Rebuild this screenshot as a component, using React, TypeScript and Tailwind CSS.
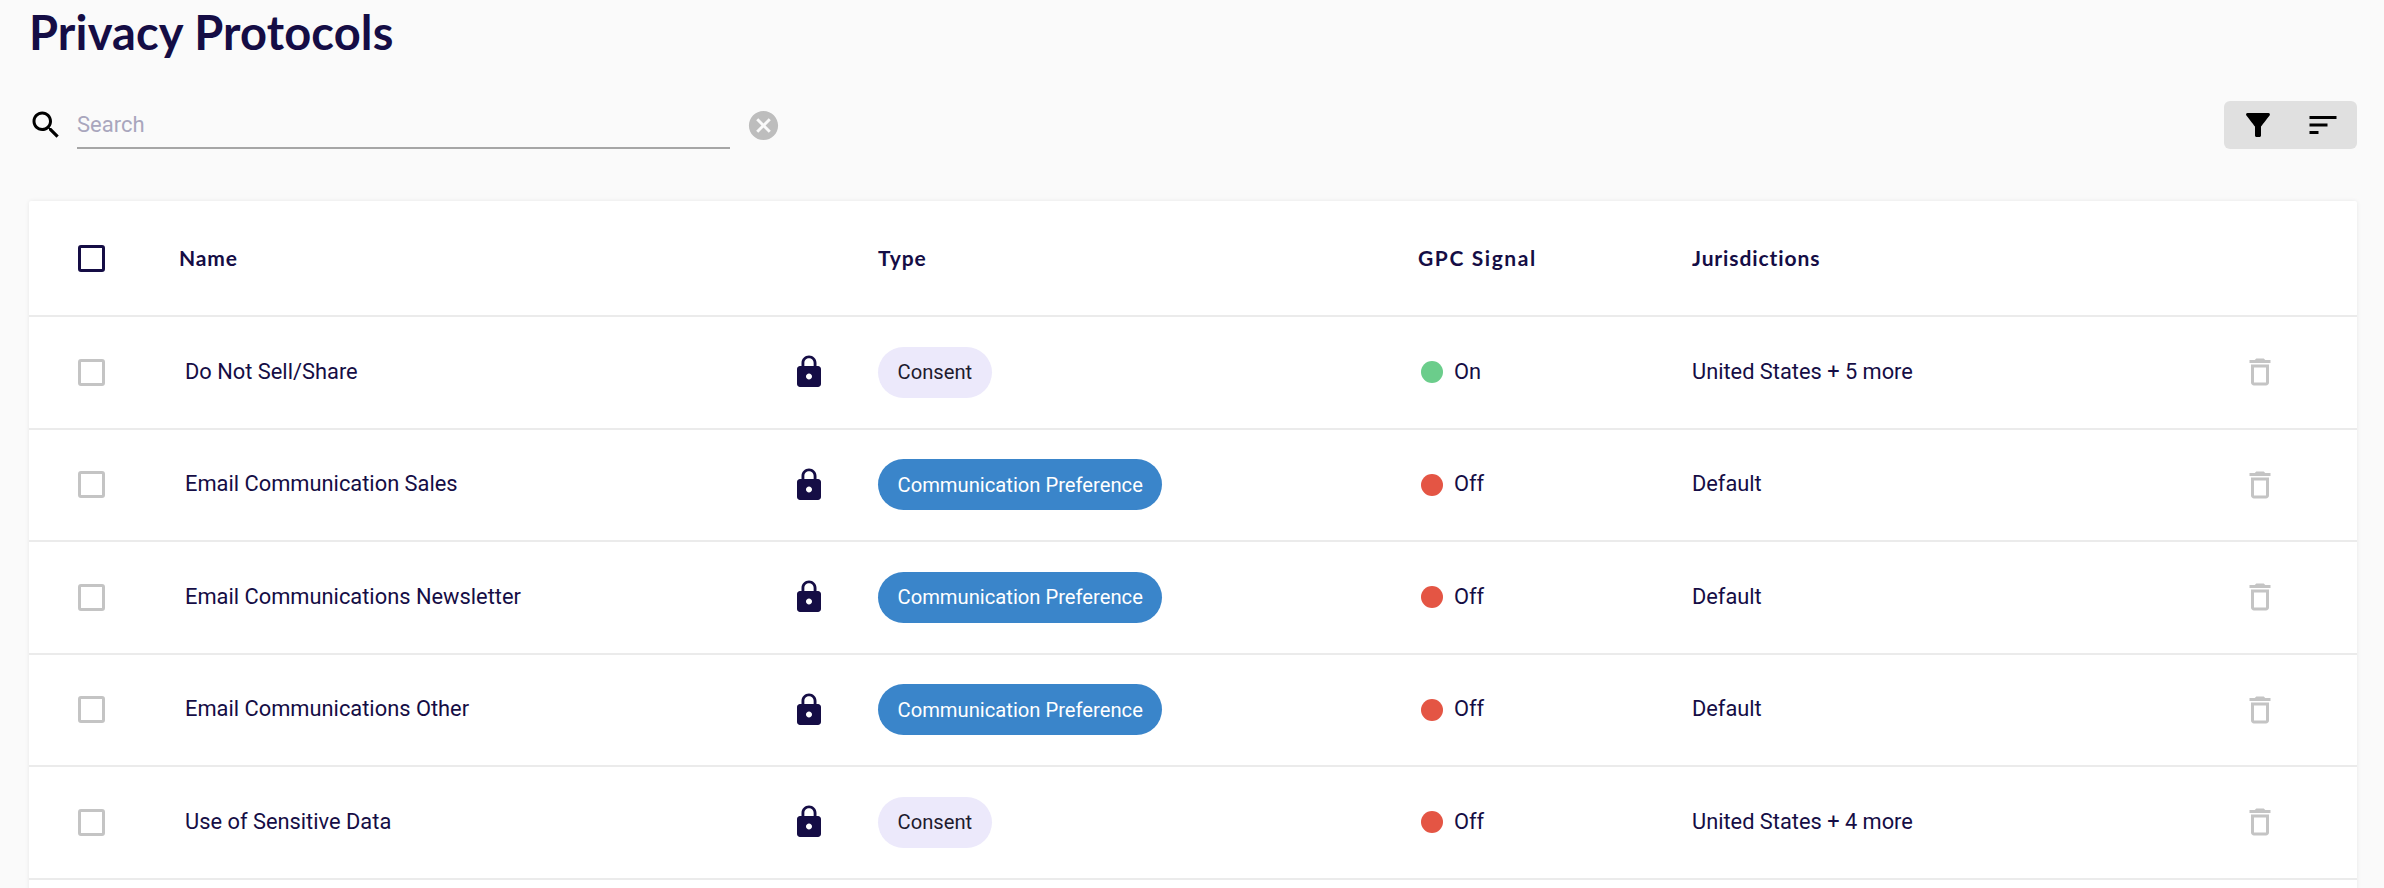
const M = (p: { d: string; c: string; s?: string }) => (
  <svg viewBox="0 0 24 24" className={`shrink-0 ${p.s ?? "w-9 h-9"} ${p.c}`} fill="currentColor" aria-hidden="true">
    <path d={p.d} />
  </svg>
);
const LOCK = "M18 8h-1V6c0-2.76-2.24-5-5-5S7 3.24 7 6v2H6c-1.1 0-2 .9-2 2v10c0 1.1.9 2 2 2h12c1.1 0 2-.9 2-2V10c0-1.1-.9-2-2-2zm-6 9c-1.1 0-2-.9-2-2s.9-2 2-2 2 .9 2 2-.9 2-2 2zm3.1-9H8.9V6c0-1.71 1.39-3.1 3.1-3.1 1.71 0 3.1 1.39 3.1 3.1v2z";
const TRASH = "M6 19c0 1.1.9 2 2 2h8c1.1 0 2-.9 2-2V7H6v12zM8 9h8v10H8V9zm7.5-5l-1-1h-5l-1 1H5v2h14V4z";

const rows = [
  { name: "Do Not Sell/Share", type: "Consent", on: true, jur: "United States + 5 more" },
  { name: "Email Communication Sales", type: "Communication Preference", on: false, jur: "Default" },
  { name: "Email Communications Newsletter", type: "Communication Preference", on: false, jur: "Default" },
  { name: "Email Communications Other", type: "Communication Preference", on: false, jur: "Default" },
  { name: "Use of Sensitive Data", type: "Consent", on: false, jur: "United States + 4 more" },
];

const grid = "grid grid-cols-[150px_699px_540px_274px_1fr] items-center";
const jost = "font-['Lato','Noto_Sans',sans-serif]";
const th = "text-[21px] font-bold tracking-[0.9px]";

export default function App() {
  return (
    <div className="h-[888px] overflow-hidden bg-[#fafafa] pl-[29px] pr-[27px] font-['Roboto',sans-serif] text-[#150d45]">
      <h1 className={`${jost} h-[62px] pt-[2px] text-[47px] leading-[60px] font-bold tracking-[0.15px] text-[#150d45]`}>
        Privacy Protocols
      </h1>
      <div className="mt-[39px] flex h-[48px] items-center">
        <svg viewBox="0 0 24 24" className="-ml-[1px] h-9 w-9 shrink-0 text-black" fill="currentColor" aria-hidden="true">
          <path d="M15.5 14h-.79l-.28-.27C15.41 12.59 16 11.11 16 9.5 16 5.91 13.09 3 9.5 3S3 5.91 3 9.5 5.91 16 9.5 16c1.61 0 3.09-.59 4.23-1.57l.27.28v.79l5 4.99L20.49 19l-4.99-5zm-6 0C7.01 14 5 11.99 5 9.5S7.01 5 9.5 5 14 7.01 14 9.5 11.99 14 9.5 14z" />
        </svg>
        <div className="ml-[13px] flex h-[48px] w-[653px] items-center border-b-2 border-[#a6a6a6] text-[22px] text-[#a9a6bd]">
          Search
        </div>
        <M d="M12 2C6.47 2 2 6.47 2 12s4.47 10 10 10 10-4.47 10-10S17.53 2 12 2zm5 13.59L15.59 17 12 13.41 8.41 17 7 15.59 10.59 12 7 8.41 8.41 7 12 10.59 15.59 7 17 8.41 13.41 12 17 15.59z" c="ml-[16px] text-[#bdbdbd]" s="h-[35px] w-[35px]" />
        <div className="ml-auto flex h-[48px] w-[133px] items-center justify-between rounded-[6px] bg-[#e0e0e0] pl-[16px] pr-[16px]">
          <M d="M4.25 5.61C6.27 8.2 10 13 10 13v6c0 .55.45 1 1 1h2c.55 0 1-.45 1-1v-6s3.72-4.8 5.74-7.39c.51-.66.04-1.61-.79-1.61H5.04c-.83 0-1.3.95-.79 1.61z" c="text-black" />
          <M d="M3 18h6v-2H3v2zM3 6v2h18V6H3zm0 7h12v-2H3v2z" c="text-black" />
        </div>
      </div>
      <div className="mt-[52px] rounded-[2px] bg-white shadow-[0_0_4px_rgba(0,0,0,0.08)]">
        <div className={`${grid} h-[116px] border-b-2 border-[#ebebeb]`}>
          <div className="pl-[49px]">
            <div className="h-[27px] w-[27px] rounded-[3px] border-[3px] border-[#150d45]" />
          </div>
          <div className={`${jost} ${th}`}>Name</div>
          <div className={`${jost} ${th}`}>Type</div>
          <div className={`${jost} text-[21px] font-bold tracking-[1.6px]`}>GPC Signal</div>
          <div className={`${jost} ${th}`}>Jurisdictions</div>
        </div>
        {rows.map((r) => (
          <div key={r.name} className={`${grid} h-[112.5px] border-b-2 border-[#ebebeb]`}>
            <div className="pl-[49px]">
              <div className="h-[27px] w-[27px] rounded-[3px] border-[3px] border-[#c4c4c4]" />
            </div>
            <div className="flex items-center justify-between pl-[6px] pr-[51px] text-[21.85px]">
              <span>{r.name}</span>
              <M d={LOCK} c="text-[#150d45]" />
            </div>
            <div>
              {r.type === "Consent" ? (
                <span className="inline-flex h-[51px] items-center rounded-full bg-[#ece9fb] px-[19.5px] text-[20.2px] text-[#1e1b2e]">
                  {r.type}
                </span>
              ) : (
                <span className="inline-flex h-[51px] items-center rounded-full bg-[#3a85ca] px-[19.5px] text-[20.2px] text-white">
                  {r.type}
                </span>
              )}
            </div>
            <div className="flex items-center gap-[11px] pl-[3px] text-[21.85px]">
              <span className={`h-[22px] w-[22px] rounded-full ${r.on ? "bg-[#6bcd8b]" : "bg-[#e45544]"}`} />
              <span>{r.on ? "On" : "Off"}</span>
            </div>
            <div className="flex items-center justify-between pr-[79px] text-[21.8px]">
              <span>{r.jur}</span>
              <M d={TRASH} c="text-[#c4c4c4]" />
            </div>
          </div>
        ))}
        <div className="h-[12px]" />
      </div>
    </div>
  );
}
